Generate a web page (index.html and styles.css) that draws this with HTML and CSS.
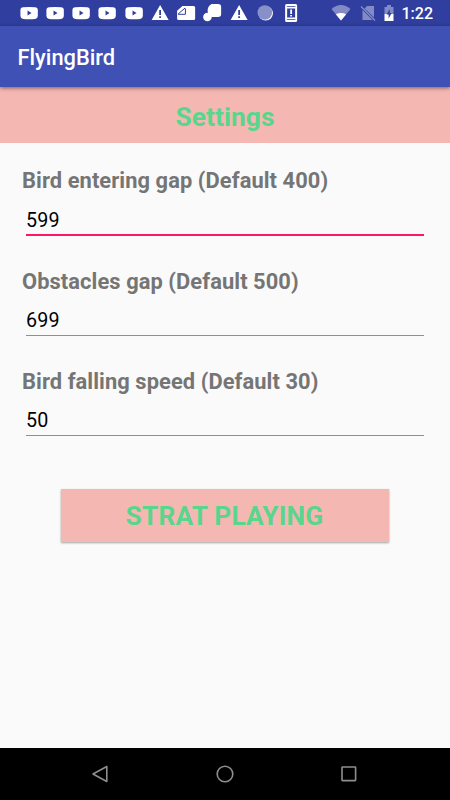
FILE: index.html
```html
<!DOCTYPE html>
<html lang="en">
<head>
<meta charset="utf-8">
<title>FlyingBird</title>
<link rel="stylesheet" href="styles.css">
</head>
<body>
<svg class="defs" aria-hidden="true">
  <symbol id="video" viewBox="0 0 26 26"><path fill-rule="evenodd" d="M7 7.2Q13 6.6 19 7.2Q21.5 7.2 21.700 10V16Q21.500 18.800 19 19Q13 19.400 7 19Q4.500 18.800 4.300 16V10Q4.500 7.200 7 7.200ZM11.400 10.600V15.400L15.400 13Z"/></symbol>
  <symbol id="warn" viewBox="0 0 26 26"><path fill-rule="evenodd" d="M13 5L21.500 20H4.500ZM12.100 10V15H13.900V10ZM12.100 16.200V18H13.900V16.200Z"/></symbol>
</svg>
<div class="status">
  <div class="notices">
    <svg><use href="#video"/></svg>
    <svg><use href="#video"/></svg>
    <svg><use href="#video"/></svg>
    <svg><use href="#video"/></svg>
    <svg><use href="#video"/></svg>
    <svg><use href="#warn"/></svg>
    <svg viewBox="0 0 26 26"><rect x="4" y="6" width="18" height="14" rx="1.500"/><path class="corner" d="M3 5H10.500L3 12Z"/><path class="fold" d="M5 14.300H12.300V8.500M5 14L12 8"/><path class="edge" d="M4.300 11.500L10 6.500"/></svg>
    <svg viewBox="0 0 26 26"><path d="M12.500 4H19Q22 4 22 7V14Q22 17 19 17H12.500Q8.500 15 8.500 10.500Q8.500 6 12.500 4Z"/><circle cx="8.300" cy="17" r="4.300"/></svg>
    <svg><use href="#warn"/></svg>
    <svg viewBox="0 0 26 26"><circle cx="13.500" cy="13.300" r="7.300"/><circle cx="12.700" cy="12.500" r="7.300" class="globe"/></svg>
    <svg viewBox="0 0 26 26"><path fill-rule="evenodd" d="M8.500 4H17.500Q19 4 19 5.500V20.500Q19 22 17.500 22H8.500Q7 22 7 20.500V5.500Q7 4 8.500 4ZM8.700 6.200V7H17.300V6.200ZM8.700 19V19.800H17.300V19ZM9 8.500V17.500H17V8.500Z"/><path d="M12.100 9.500H13.900V14H12.100ZM12.100 15H13.900V16.600H12.100Z"/></svg>
  </div>
  <div class="system">
    <svg class="wifi" viewBox="0 0 20 26"><path opacity=".4" d="M.5 9Q10 1 19.500 9L10 20.500Z"/><path d="M4.800 14.200Q10 12 15.200 14.200L10 20.500Z"/></svg>
    <svg class="sim" viewBox="0 0 16 26"><path opacity=".4" d="M7 6H14V17.500L4.500 8.500ZM2.500 10L12.500 20H2.500Z"/><path class="slash" d="M1 6.500L15 20.500"/></svg>
    <svg class="battery" viewBox="0 0 10 26"><path opacity=".4" d="M3 5H7V7H9.500V14H.5V7H3Z"/><path d="M.5 14H9.500V21H.5Z"/><path class="bolt" d="M5.800 9L2.500 14.500H4.600V18.500L7.700 13H5.800Z"/></svg>
    <span class="clock">1:22</span>
  </div>
</div>
<header class="appbar">FlyingBird</header>
<main>
  <h1>Settings</h1>
  <form>
    <label for="enter">Bird entering gap (Default 400)</label>
    <input id="enter" class="active" value="599">
    <label for="gap">Obstacles gap (Default 500)</label>
    <input id="gap" value="699">
    <label for="speed">Bird falling speed (Default 30)</label>
    <input id="speed" value="50">
    <button type="button">STRAT PLAYING</button>
  </form>
</main>
<nav>
  <svg viewBox="0 0 20 20"><path d="M16.800 2.500V17.500L3 10Z"/></svg>
  <svg viewBox="0 0 20 20"><circle cx="10" cy="10" r="7.800"/></svg>
  <svg viewBox="0 0 20 20"><rect x="3" y="3" width="13.600" height="13.600" rx=".5"/></svg>
</nav>
</body>
</html>
```

FILE: styles.css
```css
* { box-sizing: border-box; }
body {
  margin: 0;
  width: 450px;
  height: 800px;
  display: flex;
  flex-direction: column;
  overflow: hidden;
  background: #fafafa;
  font-family: Roboto, sans-serif;
}
.defs { display: none; }
.status {
  flex: none;
  height: 26px;
  display: flex;
  justify-content: space-between;
  background: #303f9f;
  color: #fff;
  fill: #fff;
}
.notices { display: flex; padding-left: 15.500px; }
.notices svg { width: 26.250px; height: 26px; }
.globe { fill: #8790c8; }
.fold { fill: none; stroke: #303f9f; stroke-width: 1; }
.corner { fill: #303f9f; }
.edge { stroke: #fff; stroke-width: 1.300; }
.system { display: flex; padding-right: 17px; }
.wifi { width: 20px; height: 26px; margin-right: 9px; }
.sim { width: 16px; height: 26px; margin-right: 8px; }
.battery { width: 10px; height: 26px; margin-right: 8px; }
.slash { stroke: #8790c8; stroke-width: 1.300; }
.bolt { fill: #303f9f; }
.clock { font-size: 16px; font-weight: 500; line-height: 28px; }
.appbar {
  flex: none;
  height: 61px;
  padding-left: 17.500px;
  background: #3f51b5;
  color: #fff;
  font-size: 21.875px;
  font-weight: 500;
  line-height: 63px;
  box-shadow: 0 1px 4px rgba(0, 0, 0, .5);
  z-index: 1;
}
main { flex: 1; }
h1 {
  margin: 0;
  height: 56px;
  background: #f5b7b1;
  color: #58d68d;
  font-size: 26.250px;
  font-weight: 700;
  letter-spacing: .1px;
  line-height: 60px;
  text-align: center;
}
form { display: flex; flex-direction: column; padding: 24px 22px 0; }
label {
  height: 28px;
  color: #757575;
  font-size: 21.875px;
  font-weight: 700;
  letter-spacing: .08px;
  line-height: 28px;
  white-space: nowrap;
}
input {
  height: 41px;
  margin: 0 4px 32px;
  padding: 11px 0 0;
  border: 0;
  border-bottom: 1px solid #8f8f8f;
  outline: 0;
  background: none;
  color: #000;
  font: 19.690px Roboto, sans-serif;
  letter-spacing: .15px;
}
input:not(.active) { height: 40px; }
input.active {
  margin-bottom: 31.500px;
  border-bottom: 2px solid #ff1767;
}
button {
  width: 328px;
  height: 53px;
  margin: 21px 0 0 38.500px;
  padding: 1px 0 0;
  border: 0;
  border-radius: 0;
  background: #f5b7b1;
  box-shadow: 0 1px 2px rgba(0, 0, 0, .35);
  color: #58d68d;
  font: 700 26.250px Roboto, sans-serif;
  letter-spacing: .22px;
}
nav {
  flex: none;
  height: 52px;
  display: flex;
  align-items: center;
  justify-content: space-between;
  padding: 0 91px 0 90px;
  background: #000;
}
nav svg {
  width: 20px;
  height: 20px;
  fill: none;
  stroke: #8e8e8e;
  stroke-width: 1.600;
  stroke-linejoin: round;
}
```
